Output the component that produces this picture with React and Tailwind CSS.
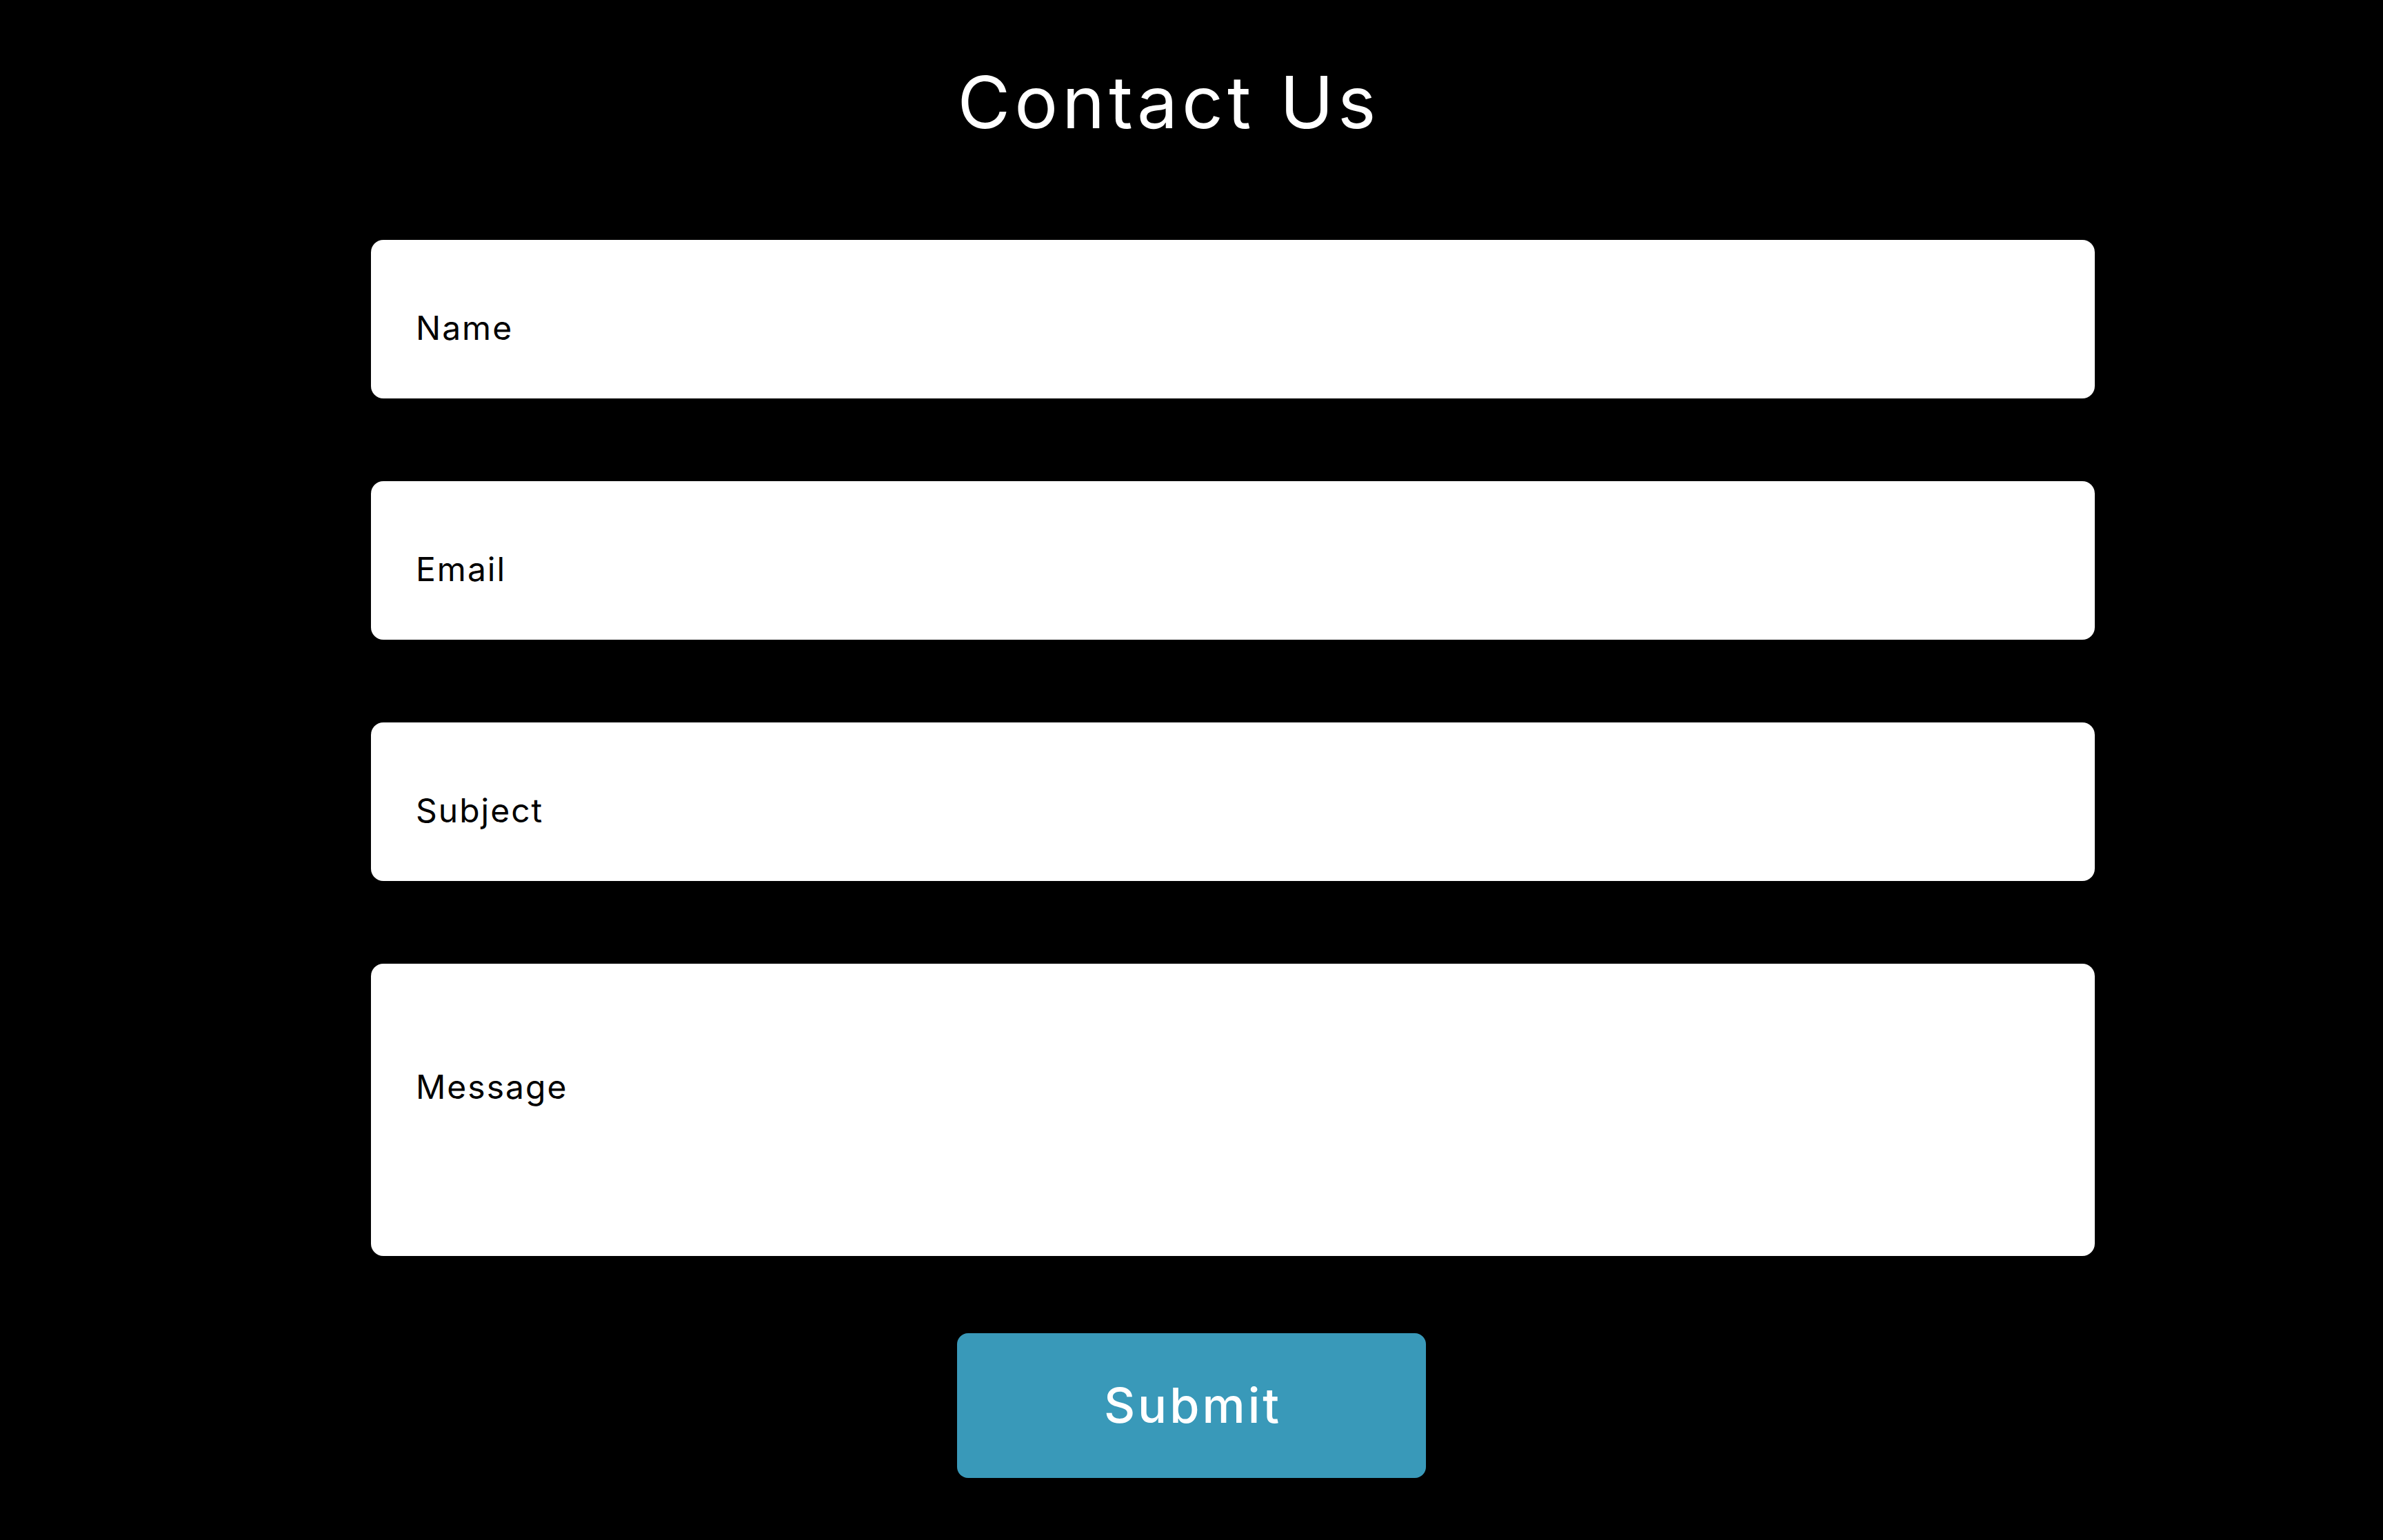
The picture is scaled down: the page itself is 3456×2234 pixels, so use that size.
import React from "react";

export default function App() {
  const field =
    "block w-full h-[230px] rounded-[18px] bg-white px-[65px] pt-[25px] text-[48px] tracking-[2px] text-black placeholder:text-black outline-none font-['Inter',sans-serif]";
  return (
    <div className="min-h-screen bg-black font-['Inter',sans-serif]">
      <h1 className="pt-[95px] pr-[66px] text-center text-white text-[105px] tracking-[6px] leading-none font-normal">
        Contact Us
      </h1>
      <form className="mt-[148px] ml-[538px] w-[2500px] flex flex-col gap-[120px]">
        <input type="text" placeholder="Name" className={field} />
        <input type="email" placeholder="Email" className={field} />
        <input type="text" placeholder="Subject" className={field} />
        <textarea
          placeholder="Message"
          className="block w-full h-[424px] resize-none rounded-[18px] bg-white px-[65px] pt-[143px] text-[48px] tracking-[2px] text-black placeholder:text-black outline-none font-['Inter',sans-serif]"
        />
      </form>
      <div className="mt-[112px] ml-[1388px]">
        <button
          type="button"
          className="w-[680px] h-[210px] rounded-[16px] bg-[#3999b9] pl-[4px] text-white text-[70px] tracking-[4px] font-medium leading-none font-['Inter',sans-serif]"
        >
          Submit
        </button>
      </div>
    </div>
  );
}
